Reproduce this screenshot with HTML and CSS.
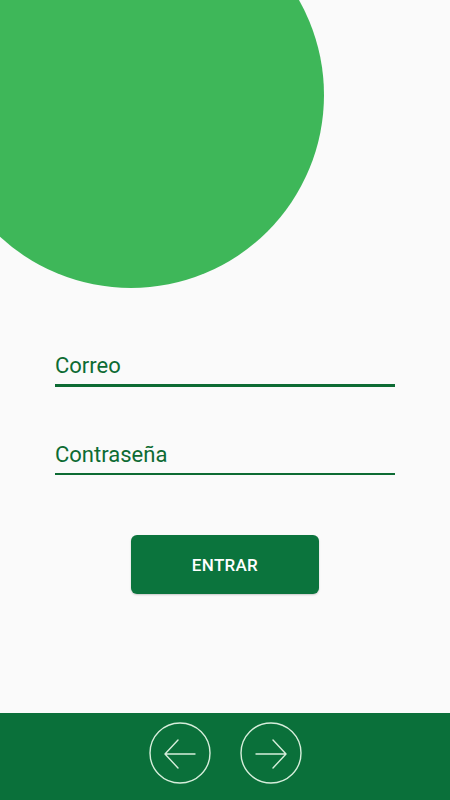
FILE: index.html
```html
<!DOCTYPE html>
<html lang="es">
<head>
    <meta charset="UTF-8">
    <meta name="viewport" content="width=device-width, initial-scale=1.0">
    <title>Login</title>
    <link rel="stylesheet" href="styles.css">
</head>
<body>
    <div class="screen">
        <div class="hero">
            <div class="blob"></div>
        </div>

        <form class="login">
            <label class="field focused">
                <input type="email" placeholder="Correo">
            </label>
            <label class="field">
                <input type="password" placeholder="Contraseña">
            </label>
            <button type="button" class="btn-enter">ENTRAR</button>
        </form>

        <nav class="bottom-bar">
            <button class="nav-btn" aria-label="Anterior">
                <svg width="62" height="62" viewBox="0 0 62 62" fill="none" stroke="#d6eedb" stroke-width="1.4" stroke-linecap="round" stroke-linejoin="round">
                    <circle cx="31" cy="31" r="30"/>
                    <path d="M46 32H17M29 18L16 32L29 46"/>
                </svg>
            </button>
            <button class="nav-btn" aria-label="Siguiente">
                <svg width="62" height="62" viewBox="0 0 62 62" fill="none" stroke="#d6eedb" stroke-width="1.4" stroke-linecap="round" stroke-linejoin="round">
                    <circle cx="31" cy="31" r="30"/>
                    <path d="M16 32H45M33 18L46 32L33 46"/>
                </svg>
            </button>
        </nav>
    </div>
</body>
</html>
```

FILE: styles.css
```css
body {
    margin: 0;
    background-color: #fafafa;
    font-family: Roboto, "Noto Sans", sans-serif;
}

.screen {
    display: flex;
    flex-direction: column;
    height: 800px;
    overflow: hidden;
}

.hero {
    height: 288px;
    overflow: hidden;
    flex-shrink: 0;
}

.blob {
    width: 386px;
    height: 386px;
    margin-top: -98px;
    margin-left: -62px;
    border-radius: 50%;
    background-color: #3eb759;
}

.login {
    display: flex;
    flex-direction: column;
    align-items: center;
    padding-top: 56px;
    flex: 1;
}

.field {
    display: block;
    width: 340px;
    border-bottom: 2px solid #0d6b33;
    margin-bottom: 47px;
}

.field.focused {
    border-bottom: 3px solid #0d6b33;
    margin-bottom: 46px;
}

.field input {
    display: block;
    width: 100%;
    box-sizing: border-box;
    border: none;
    outline: none;
    background: transparent;
    padding: 6px 0 2px 0;
    font-family: Roboto, "Noto Sans", sans-serif;
    font-size: 22px;
    line-height: 32px;
    color: #0d6b33;
}

.field input::placeholder {
    color: #0d6b33;
    opacity: 1;
}

.btn-enter {
    margin-top: 13px;
    width: 188px;
    height: 59px;
    border: none;
    border-radius: 6px;
    background-color: #0b743d;
    color: #ffffff;
    font-family: Roboto, "Noto Sans", sans-serif;
    font-size: 17px;
    font-weight: 500;
    letter-spacing: 0.3px;
    cursor: pointer;
    box-shadow: 0 1px 2px rgba(0,0,0,0.2);
}

.bottom-bar {
    height: 87px;
    box-sizing: border-box;
    padding-bottom: 8px;
    flex-shrink: 0;
    background-color: #0a703a;
    display: flex;
    justify-content: center;
    align-items: center;
    gap: 29px;
}

.nav-btn {
    padding: 0;
    border: none;
    background: none;
    display: flex;
    cursor: pointer;
}
```
